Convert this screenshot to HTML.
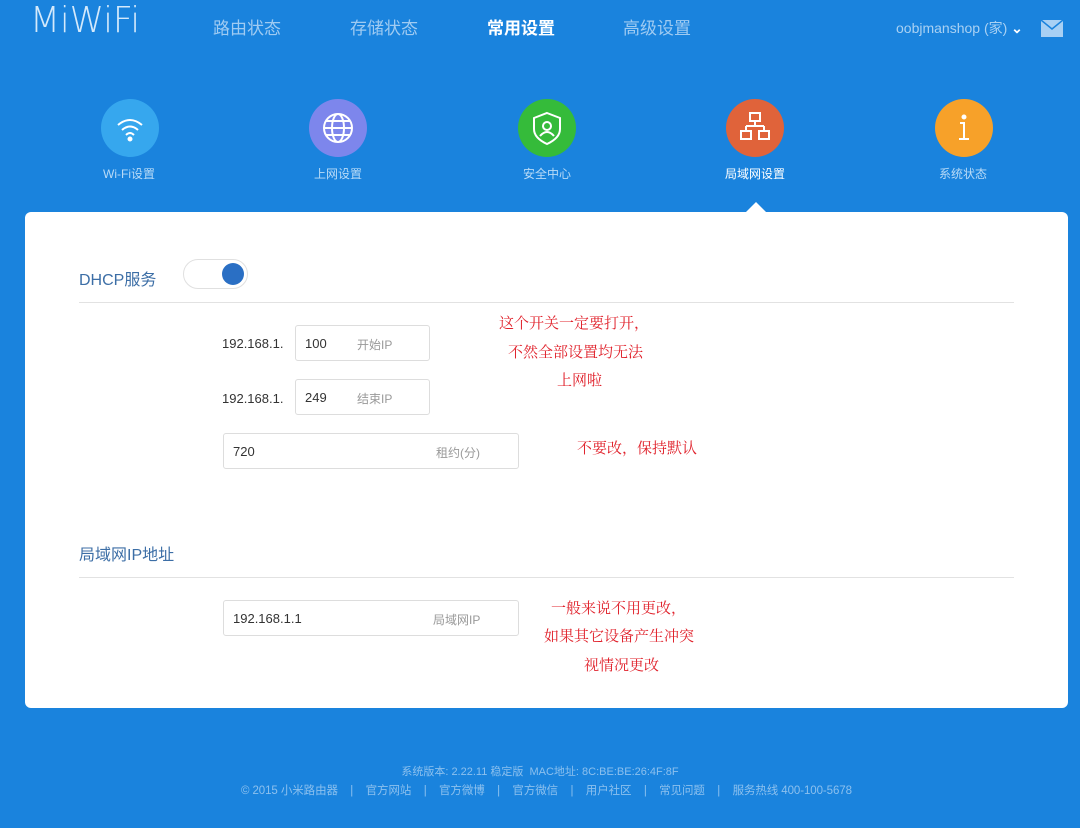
<!DOCTYPE html>
<html><head><meta charset="utf-8"><style>
*{margin:0;padding:0;box-sizing:border-box}
body{width:1080px;height:828px;background:#1a83dd;font-family:"Liberation Sans","Noto Sans CJK SC",sans-serif;position:relative;overflow:hidden;color:#333}
.abs{position:absolute}
.nav{top:14px;font-size:17px;color:#9fcbf2}
.circ{width:58px;height:58px;border-radius:50%;top:99px}
.lbl{top:165px;font-size:12px;color:#b9dbf7;width:120px;text-align:center}
.card{left:25px;top:212px;width:1043px;height:496px;background:#fff;border-radius:6px}
.tri{left:746px;top:202px;width:0;height:0;border-left:10px solid transparent;border-right:10px solid transparent;border-bottom:10px solid #fff}
.h{font-size:16px;color:#3c6ea6}
.line{height:1px;background:#e2e2e2;left:79px;width:935px}
.inp{border:1px solid #ddd;border-radius:3px;height:36px;background:#fff}
.red{color:#e0202a;font-size:15px;font-family:"Noto Serif CJK SC","Liberation Serif",serif}
.foot{color:#8cc0ee;font-size:11px;width:1080px;text-align:center;left:0}
</style></head><body>
<svg class="abs" style="left:28px;top:0" width="120" height="40"><text x="2" y="32" font-family="DejaVu Sans" font-weight="200" font-size="36" fill="#d4e9fb" textLength="110" lengthAdjust="spacingAndGlyphs">MiWiFi</text></svg>
<div class="abs nav" style="left:213px">路由状态</div>
<div class="abs nav" style="left:350px">存储状态</div>
<div class="abs nav" style="left:487px;color:#fff;font-weight:bold">常用设置</div>
<div class="abs nav" style="left:623px">高级设置</div>
<div class="abs" style="left:896px;top:18px;font-size:14px;color:#a9d1f3">oobjmanshop (家) <span style="color:#fff;font-weight:bold">&#8964;</span></div>
<svg class="abs" style="left:1041px;top:20px" width="22" height="17"><rect width="22" height="17" fill="#a8d0f4"/><path d="M0 0 L11 9 L22 0" fill="none" stroke="#1a83dd" stroke-width="1.5"/></svg>

<div class="abs circ" style="left:101px;background:#36a7ee"></div>
<svg class="abs" style="left:101px;top:99px" width="58" height="58" fill="none" stroke="#fff" stroke-width="2"><path d="M17 26 Q29 16 41 26"/><path d="M21 31 Q29 24 37 31"/><path d="M25 36 Q29 32 33 36"/><circle cx="29" cy="40" r="1.5" fill="#fff"/></svg>
<div class="abs lbl" style="left:69px">Wi-Fi设置</div>

<div class="abs circ" style="left:309px;background:#7d86ec"></div>
<svg class="abs" style="left:309px;top:99px" width="58" height="58" fill="none" stroke="#fff" stroke-width="2"><circle cx="29" cy="29" r="14"/><ellipse cx="29" cy="29" rx="6" ry="14"/><path d="M15 29H43M17 22H41M17 36H41"/></svg>
<div class="abs lbl" style="left:278px">上网设置</div>

<div class="abs circ" style="left:518px;background:#35bb3a"></div>
<svg class="abs" style="left:518px;top:99px" width="58" height="58" fill="none" stroke="#fff" stroke-width="2"><path d="M29 14 L42 19 V30 Q42 39 29 45 Q16 39 16 30 V19 Z"/><circle cx="29" cy="27" r="4"/><path d="M22 37 Q29 29 36 37"/></svg>
<div class="abs lbl" style="left:487px">安全中心</div>

<div class="abs circ" style="left:726px;background:#e0633a"></div>
<svg class="abs" style="left:726px;top:99px" width="58" height="58" fill="none" stroke="#fff" stroke-width="2"><rect x="24" y="14" width="10" height="8"/><path d="M29 22V27M20 27H38M20 27V32M38 27V32"/><rect x="15" y="32" width="10" height="8"/><rect x="33" y="32" width="10" height="8"/></svg>
<div class="abs lbl" style="left:695px;color:#fff">局域网设置</div>

<div class="abs circ" style="left:935px;background:#f7a129"></div>
<svg class="abs" style="left:935px;top:99px" width="58" height="58" fill="none" stroke="#fff" stroke-width="2"><circle cx="29" cy="18" r="1.5" fill="#fff"/><path d="M25 24H29V40M24 40H34"/></svg>
<div class="abs lbl" style="left:903px">系统状态</div>

<div class="abs tri"></div>
<div class="abs card"></div>

<div class="abs h" style="left:79px;top:266px">DHCP服务</div>
<div class="abs" style="left:183px;top:259px;width:65px;height:30px;border:1px solid #e0e0e0;border-radius:15px;background:#fff"></div>
<div class="abs" style="left:222px;top:263px;width:22px;height:22px;border-radius:50%;background:#2a6fc4"></div>
<div class="abs line" style="top:302px"></div>

<div class="abs" style="left:222px;top:336px;font-size:13px">192.168.1.</div>
<div class="abs inp" style="left:295px;top:325px;width:135px"><span class="abs" style="left:9px;top:10px;font-size:13px">100</span><span class="abs" style="left:61px;top:10px;font-size:12px;color:#999">开始IP</span></div>
<div class="abs" style="left:222px;top:391px;font-size:13px">192.168.1.</div>
<div class="abs inp" style="left:295px;top:379px;width:135px"><span class="abs" style="left:9px;top:10px;font-size:13px">249</span><span class="abs" style="left:61px;top:10px;font-size:12px;color:#999">结束IP</span></div>
<div class="abs inp" style="left:223px;top:433px;width:296px"><span class="abs" style="left:9px;top:10px;font-size:13px">720</span><span class="abs" style="left:212px;top:10px;font-size:12px;color:#999">租约(分)</span></div>

<div class="abs red" style="left:499px;top:312px">这个开关一定要打开，</div>
<div class="abs red" style="left:508px;top:341px">不然全部设置均无法</div>
<div class="abs red" style="left:557px;top:369px">上网啦</div>
<div class="abs red" style="left:577px;top:437px">不要改，保持默认</div>

<div class="abs h" style="left:79px;top:541px">局域网IP地址</div>
<div class="abs line" style="top:577px"></div>
<div class="abs inp" style="left:223px;top:600px;width:296px"><span class="abs" style="left:9px;top:10px;font-size:13px">192.168.1.1</span><span class="abs" style="left:209px;top:10px;font-size:12px;color:#999">局域网IP</span></div>
<div class="abs red" style="left:551px;top:597px">一般来说不用更改，</div>
<div class="abs red" style="left:544px;top:625px">如果其它设备产生冲突</div>
<div class="abs red" style="left:584px;top:654px">视情况更改</div>

<div class="abs foot" style="top:763px">系统版本: 2.22.11 稳定版&nbsp;&nbsp;MAC地址: 8C:BE:BE:26:4F:8F</div>
<svg class="abs" style="left:0;top:780px" width="1080" height="20"><text x="241" y="14" font-family="Liberation Sans, Noto Sans CJK SC, sans-serif" font-size="11.5" fill="#8cc0ee" textLength="611" lengthAdjust="spacing" xml:space="preserve">© 2015 小米路由器    |    官方网站    |    官方微博    |    官方微信    |    用户社区    |    常见问题    |    服务热线 400-100-5678</text></svg>
</body></html>
